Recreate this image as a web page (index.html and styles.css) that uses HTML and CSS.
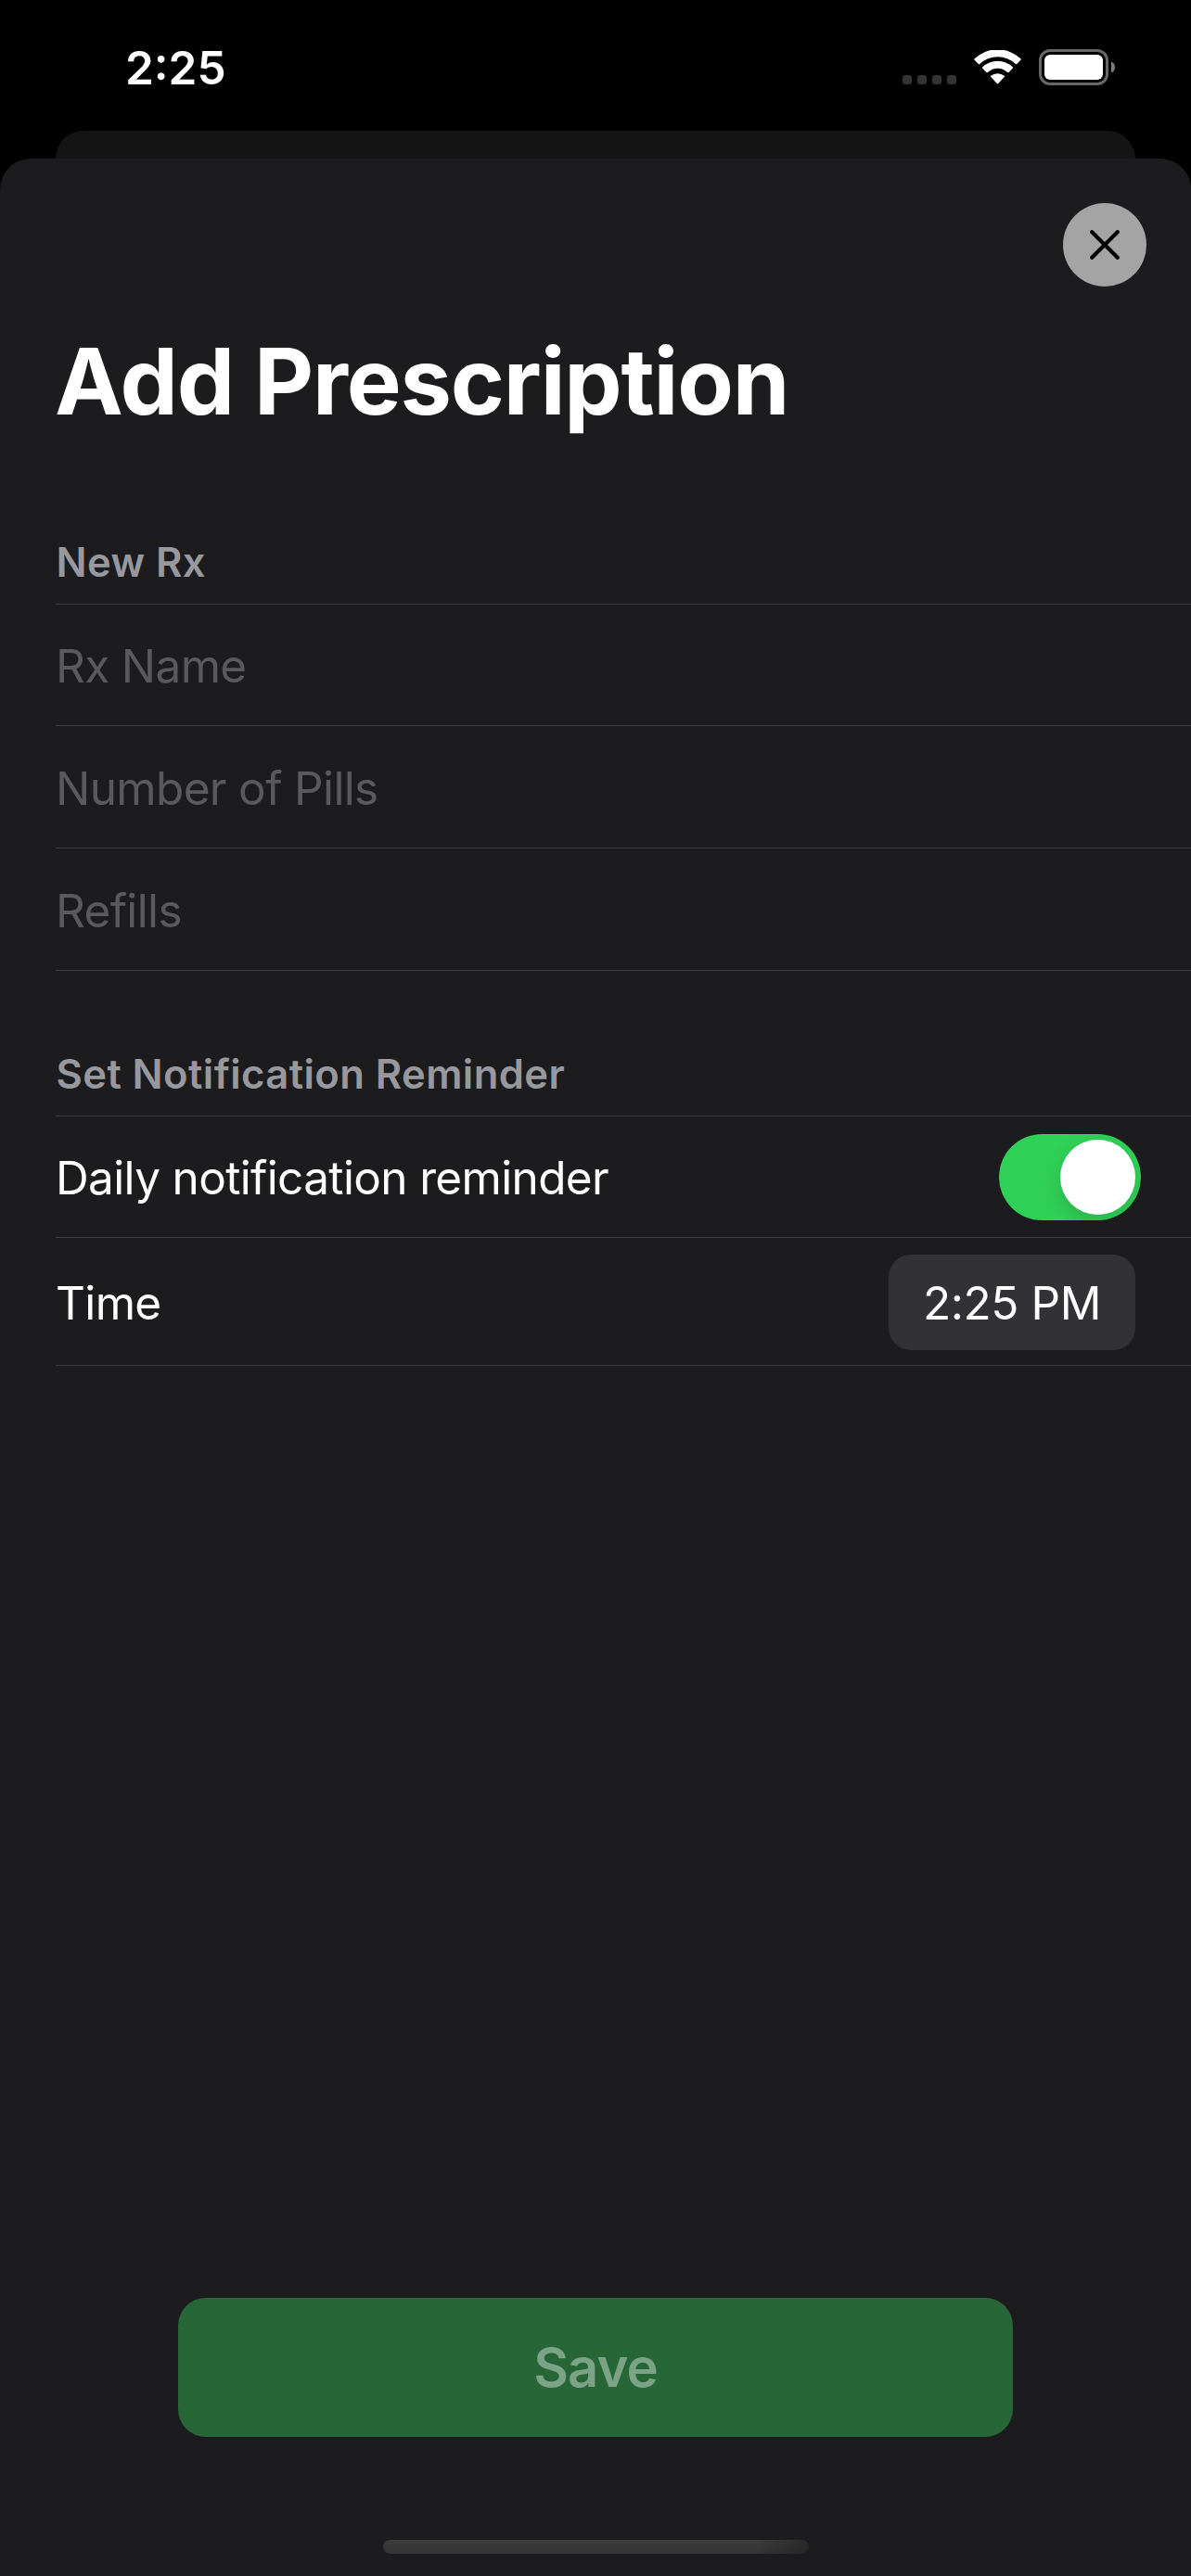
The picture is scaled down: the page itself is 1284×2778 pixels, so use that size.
FILE: index.html
```html
<!DOCTYPE html>
<html lang="en">
<head>
<meta charset="utf-8">
<title>Add Prescription</title>
<link rel="stylesheet" href="styles.css">
</head>
<body>
<header class="status-bar">
  <span class="clock">2:25</span>
  <div class="status-icons">
    <svg class="cellular" width="58" height="10" viewBox="0 0 58 10"><rect width="10" height="10" rx="3"/><rect x="16" width="10" height="10" rx="3"/><rect x="32" width="10" height="10" rx="3"/><rect x="48" width="10" height="10" rx="3"/></svg>
    <svg class="wifi" width="52" height="38" viewBox="0 0 52 38"><path d="M.6 11.200a1 1 0 0 1 0-1.400 36 36 0 0 1 49.800 0 1 1 0 0 1 0 1.400l-4.200 4.300a1 1 0 0 1-1.400 0 28 28 0 0 0-38.600 0 1 1 0 0 1-1.400 0zM9.300 20.200a1 1 0 0 1 0-1.400 23.600 23.600 0 0 1 32.400 0 1 1 0 0 1 0 1.400l-4.200 4.300a1 1 0 0 1-1.400 0 15.200 15.200 0 0 0-21.200 0 1 1 0 0 1-1.400 0zM18.200 29.600a1 1 0 0 1 0-1.400 11.800 11.800 0 0 1 14.600 0 1 1 0 0 1 0 1.400l-6.600 6.900a1 1 0 0 1-1.400 0z"/></svg>
    <svg class="battery" width="82" height="39" viewBox="0 0 82 39"><rect class="battery-case" x="1.500" y="1.500" width="72" height="36" rx="10.500"/><rect class="battery-level" x="6" y="6" width="63" height="27" rx="6"/><path class="battery-cap" d="M78 13.500a6.500 6.500 0 0 1 0 12z"/></svg>
  </div>
</header>
<div class="sheet-behind"></div>
<main class="sheet">
  <div class="sheet-bar">
    <button class="close" aria-label="Close"><svg width="32" height="32" viewBox="0 0 32 32"><path d="M2.200 2.200 29.800 29.800M29.800 2.200 2.200 29.800"/></svg></button>
  </div>
  <h1 class="title">Add Prescription</h1>
  <section class="group">
    <h2 class="group-title">New Rx</h2>
    <div class="row field first">Rx Name</div>
    <div class="row field">Number of Pills</div>
    <div class="row field">Refills</div>
  </section>
  <section class="group reminder">
    <h2 class="group-title">Set Notification Reminder</h2>
    <div class="row first toggle-row"><span>Daily notification reminder</span><span class="switch"><span class="knob"></span></span></div>
    <div class="row time-row"><span>Time</span><span class="time-value">2:25 PM</span></div>
  </section>
  <footer class="actions">
    <button class="save">Save</button>
    <div class="home-indicator"></div>
  </footer>
</main>
</body>
</html>
```
FILE: styles.css
```css
* {
  box-sizing: border-box;
  margin: 0;
}

body {
  display: flex;
  flex-direction: column;
  width: 1284px;
  height: 2778px;
  overflow: hidden;
  background: #000;
  color: #fff;
  font-family: Inter, "Liberation Sans", sans-serif;
  font-size: 49.5px;
  line-height: 60px;
}

button {
  border: 0;
  padding: 0;
  font: inherit;
}

.status-bar {
  display: flex;
  justify-content: space-between;
  height: 141px;
  padding: 43px 82px 0 135px;
}

.clock {
  font-weight: 600;
}

.status-icons {
  display: flex;
  align-items: flex-start;
}

.cellular {
  margin: 38px 19px 0 0;
  fill: #333;
}

.wifi {
  margin: 11px 18px 0 0;
  fill: #fff;
}

.wifi path {
  transform: translateY(-0.5px);
}

.battery {
  margin-top: 10px;
}

.battery-case {
  fill: none;
  stroke: #676767;
  stroke-width: 3;
}

.battery-level {
  fill: #fff;
}

.battery-cap {
  fill: #7c7c7c;
}

.sheet-behind {
  height: 30px;
  margin: 0 60px;
  border-radius: 30px 30px 0 0;
  background: #141414;
}

.sheet {
  display: flex;
  flex: 1;
  flex-direction: column;
  border-radius: 33px 33px 0 0;
  background: #1c1c1e;
}

.sheet-bar {
  display: flex;
  justify-content: flex-end;
  height: 180px;
  padding: 48px 48px 0 0;
}

.close {
  display: flex;
  align-items: center;
  justify-content: center;
  width: 90px;
  height: 90px;
  border-radius: 50%;
  background: #a4a4a4;
}

.close svg {
  fill: none;
  stroke: #000;
  stroke-width: 4.2;
  stroke-linecap: round;
}

.title {
  padding-left: 59px;
  font-size: 99px;
  font-weight: 700;
  letter-spacing: -1.2px;
  line-height: 120px;
}

.group {
  padding: 105px 0 0 60px;
}

.reminder {
  padding-top: 81px;
}

.group-title {
  height: 75px;
  padding: 1px 0 0 0.5px;
  color: #98989f;
  font-size: 43.6px;
  font-weight: 600;
  letter-spacing: 0.4px;
  line-height: 60px;
}

.row {
  display: flex;
  align-items: center;
  justify-content: space-between;
  height: 132px;
  padding-top: 3px;
  border-bottom: 1px solid #3d3d40;
  letter-spacing: -0.65px;
}

.first {
  padding-top: 2px;
  border-top: 1px solid #3d3d40;
}

.field {
  color: #5a5a5e;
}

.toggle-row {
  padding-right: 54px;
}

.switch {
  display: flex;
  align-items: center;
  justify-content: flex-end;
  width: 153px;
  height: 93px;
  margin-bottom: 1px;
  padding: 6px;
  overflow: hidden;
  border-radius: 47px;
  background: #30d158;
}

.knob {
  width: 81px;
  height: 81px;
  border-radius: 50%;
  background: #fff;
  box-shadow: 0 9px 24px rgba(0, 0, 0, 0.15);
}

.time-row {
  height: 138px;
  padding-right: 60px;
}

.time-value {
  display: flex;
  align-items: center;
  justify-content: center;
  width: 266px;
  height: 103px;
  margin-bottom: 1px;
  padding-top: 1px;
  border-radius: 24px;
  background: #323136;
  letter-spacing: -0.4px;
}

.actions {
  display: flex;
  flex-direction: column;
  align-items: center;
  margin-top: auto;
  padding-bottom: 24px;
}

.save {
  width: 900px;
  height: 150px;
  margin-bottom: 111px;
  border-radius: 30px;
  background: #266637;
  color: #7ca386;
  font-size: 58px;
  font-weight: 600;
  letter-spacing: -0.9px;
}

.home-indicator {
  width: 459px;
  height: 15px;
  border-radius: 8px;
  background:
    linear-gradient(100deg, transparent 88%, rgba(28, 28, 30, 0.6) 100%),
    linear-gradient(#3c3c3c, #343434);
}
```
